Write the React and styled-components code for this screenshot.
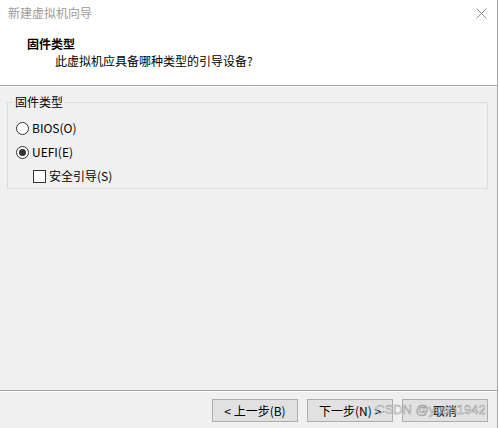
import React from "react";
import styled, { createGlobalStyle } from "styled-components";

const Global = createGlobalStyle`
  html, body { margin: 0; padding: 0; background: #ffffff; }
  body { font-family: "Noto Sans CJK SC", "Noto Sans", sans-serif; font-size: 12px; color: #000; }
`;

const Window = styled.div`
  width: 499px;
  height: 428px;
  display: flex;
  background: #ffffff;
  overflow: hidden;
`;

const Dialog = styled.div`
  width: 497px;
  height: 428px;
  display: flex;
  flex-direction: column;
  border-right: 1px solid #a8a8a8;
  background: #f0f0f0;
`;

const Header = styled.div`
  height: 85px;
  background: #ffffff;
  display: flex;
  flex-direction: column;
`;

const TitleBar = styled.div`
  height: 26px;
  display: flex;
  align-items: center;
  justify-content: space-between;
  padding: 0 10px 0 8px;
`;

const TitleText = styled.span`
  color: #9a9a9a;
  font-size: 12px;
  line-height: 16px;
`;

const Heading = styled.div`
  margin-top: 10px;
  padding-left: 27px;
  font-weight: bold;
  font-size: 12px;
  line-height: 16px;
`;

const SubHeading = styled.div`
  margin-top: 1px;
  padding-left: 55px;
  font-size: 12px;
  line-height: 16px;
`;

const Rule = styled.div`
  height: 1px;
  background: #a0a0a0;
  border-bottom: 1px solid #ffffff;
`;

const Body = styled.div`
  height: 303px;
  padding: 7px 9px 0 7px;
  box-sizing: border-box;
`;

const GroupBox = styled.fieldset`
  margin: 0;
  padding: 6px 8px 0 8px;
  border: 1px solid #dcdcdc;
  min-width: 0;
`;

const Legend = styled.legend`
  padding: 0 2px;
  margin-left: -3px;
  font-size: 12px;
  line-height: 16px;
`;

const OptionRow = styled.label`
  display: flex;
  align-items: center;
  height: 24px;
  padding-left: ${(p) => p.$indent || 0}px;
  gap: 3px;
  line-height: 16px;
`;

const RadioCircle = styled.span`
  width: 11px;
  height: 11px;
  border: 1px solid #333333;
  border-radius: 50%;
  background: #ffffff;
  display: flex;
  align-items: center;
  justify-content: center;
  flex: none;
  &::after {
    content: "";
    width: 7px;
    height: 7px;
    border-radius: 50%;
    background: #333333;
    display: ${(p) => (p.$checked ? "block" : "none")};
  }
`;

const CheckSquare = styled.span`
  width: 11px;
  height: 11px;
  border: 1px solid #333333;
  background: #ffffff;
  flex: none;
`;

const Footer = styled.div`
  position: relative;
  flex: 1;
  display: flex;
  justify-content: flex-end;
  align-items: flex-start;
  gap: 9px;
  padding: 7px 9px 0 0;
`;

const Button = styled.button`
  width: 86px;
  height: 23px;
  box-sizing: border-box;
  margin: 0;
  padding: 0;
  background: #e1e1e1;
  border: 1px solid #adadad;
  font-family: "Noto Sans CJK SC", "Noto Sans", sans-serif;
  font-size: 12px;
  line-height: 16px;
  color: #000;
`;

const Watermark = styled.span`
  position: absolute;
  left: 375px;
  top: 10px;
  font-family: "Liberation Sans", Arial, sans-serif;
  font-size: 13px;
  line-height: 16px;
  color: rgba(255, 255, 255, 0.6);
  -webkit-text-stroke: 0.5px rgba(125, 125, 125, 0.85);
  pointer-events: none;
  white-space: nowrap;
`;

const CloseIcon = () => (
  <svg width="11" height="11" viewBox="0 0 11 11">
    <path d="M0.5 0.5 L10.5 10.5 M10.5 0.5 L0.5 10.5" stroke="#8a8a8a" strokeWidth="1" fill="none" />
  </svg>
);

export default function App() {
  return (
    <>
      <Global />
      <Window>
        <Dialog>
          <Header>
            <TitleBar>
              <TitleText>新建虚拟机向导</TitleText>
              <CloseIcon />
            </TitleBar>
            <Heading>固件类型</Heading>
            <SubHeading>此虚拟机应具备哪种类型的引导设备?</SubHeading>
          </Header>
          <Rule />
          <Body>
            <GroupBox>
              <Legend>固件类型</Legend>
              <OptionRow>
                <RadioCircle />
                BIOS(O)
              </OptionRow>
              <OptionRow>
                <RadioCircle $checked />
                UEFI(E)
              </OptionRow>
              <OptionRow $indent={17}>
                <CheckSquare />
                安全引导(S)
              </OptionRow>
            </GroupBox>
          </Body>
          <Rule />
          <Footer>
            <Button>&lt; 上一步(B)</Button>
            <Button>下一步(N) &gt;</Button>
            <Button>取消</Button>
            <Watermark>CSDN @yuan1942</Watermark>
          </Footer>
        </Dialog>
      </Window>
    </>
  );
}
